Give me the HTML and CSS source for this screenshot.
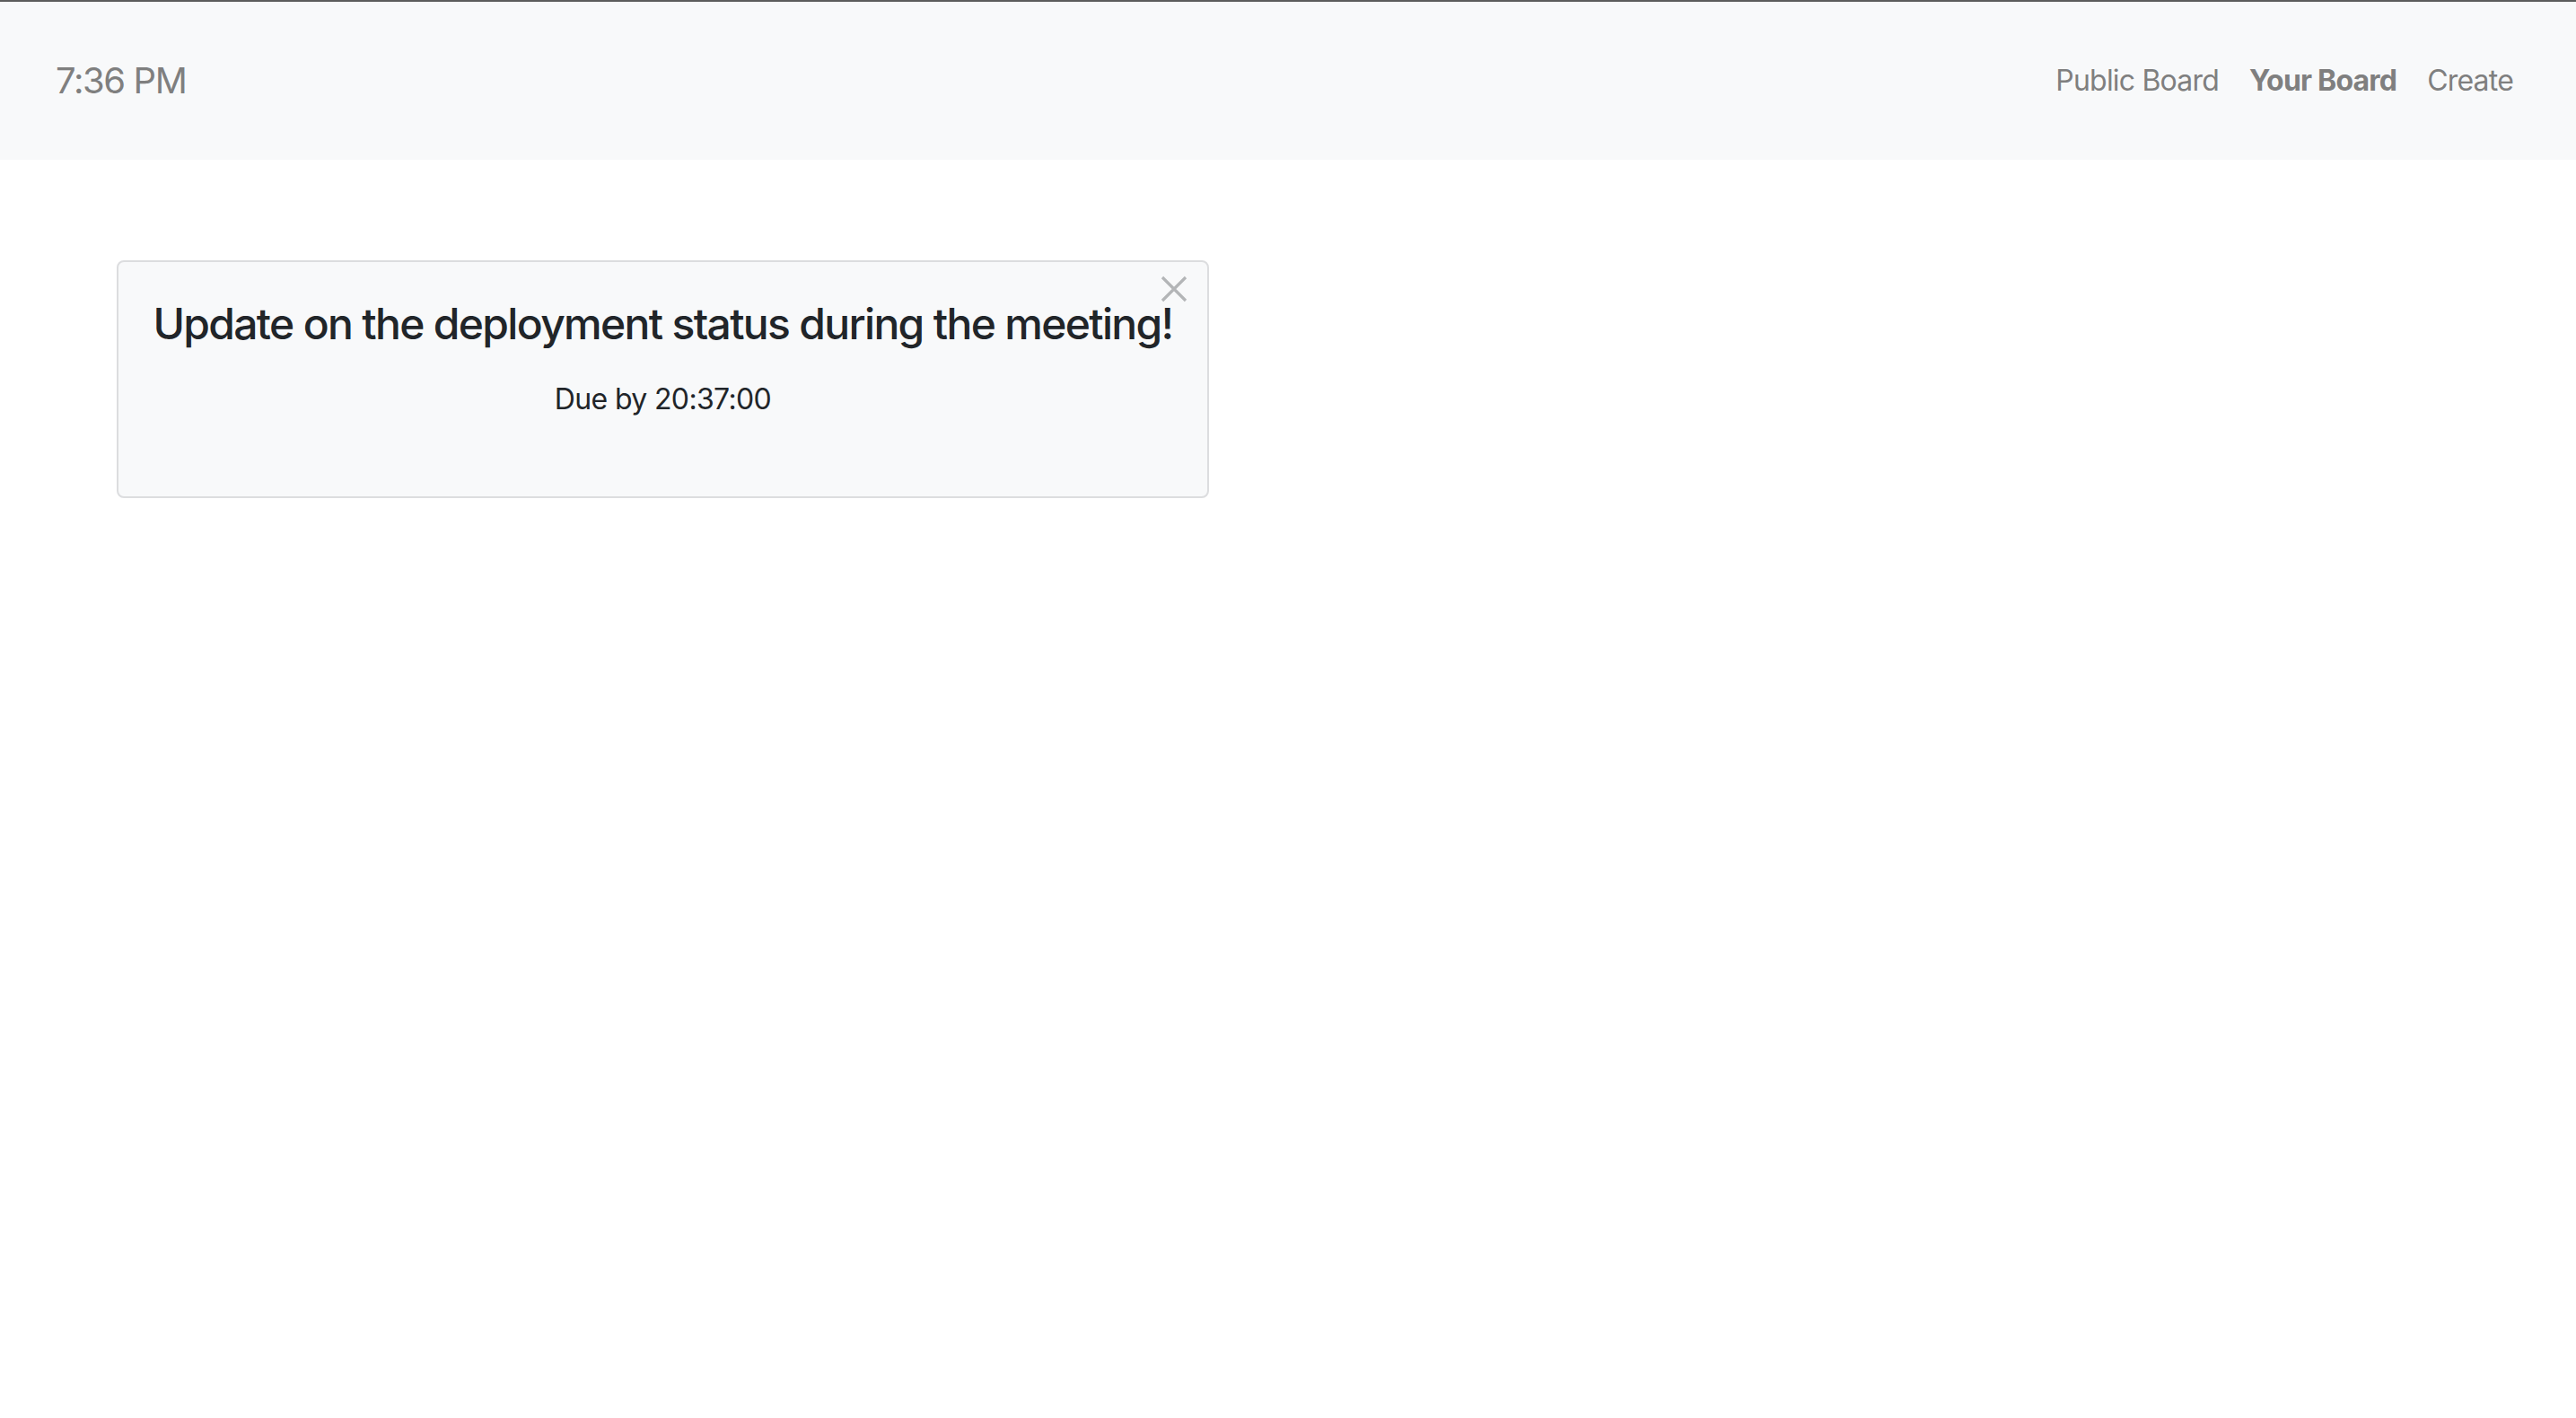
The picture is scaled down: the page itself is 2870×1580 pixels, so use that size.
FILE: index.html
```html
<!DOCTYPE html>
<html lang="en">
<head>
<meta charset="utf-8">
<title>Your Board</title>
<link rel="stylesheet" href="styles.css">
</head>
<body>
<nav class="navbar">
  <span class="brand">7:36 PM</span>
  <ul class="nav">
    <li><a class="nav-link" href="#">Public Board</a></li>
    <li><a class="nav-link active" href="#">Your Board</a></li>
    <li><a class="nav-link" href="#">Create</a></li>
  </ul>
</nav>
<main class="board">
  <div class="card">
    <button class="close" aria-label="Close">
      <svg viewBox="0 0 30 30" width="30" height="30"><path d="M2 2 L28 28 M28 2 L2 28" stroke="#b3b5b7" stroke-width="3.2" fill="none" stroke-linecap="butt"/></svg>
    </button>
    <h4 class="card-title">Update on the deployment status during the meeting!</h4>
    <p class="card-text">Due by 20:37:00</p>
  </div>
</main>
</body>
</html>
```
FILE: styles.css
```css
* { box-sizing: border-box; }
html, body { margin: 0; padding: 0; }
body {
  font-family: Inter, "Noto Sans", "Liberation Sans", sans-serif;
  background: #ffffff;
  color: #212529;
  border-top: 2px solid #5c5c5c;
}
.navbar {
  display: flex;
  align-items: center;
  justify-content: space-between;
  height: 176px;
  background: #f8f9fa;
  padding: 0 53px 0 62px;
}
.brand {
  font-size: 40px;
  color: #7f7f7f;
  line-height: 1;
  letter-spacing: -0.035em;
}
.nav {
  display: flex;
  list-style: none;
  margin: 0;
  padding: 0;
}
.nav-link {
  display: block;
  padding: 0 17px;
  font-size: 32px;
  color: #7f7f7f;
  text-decoration: none;
  line-height: 1.5;
  letter-spacing: -0.025em;
}
.nav-link.active { font-weight: 700; }
.board {
  padding: 112px 0 0 130px;
}
.card {
  position: relative;
  width: 1217px;
  height: 265px;
  background: #f8f9fa;
  border: 2px solid #dcdddf;
  border-radius: 8px;
  padding: 40px 0 0;
  text-align: center;
}
.card-title {
  margin: 0;
  font-size: 48px;
  font-weight: 500;
  line-height: 1.2;
  color: #212529;
  letter-spacing: -0.035em;
  white-space: nowrap;
}
.card-text {
  margin: 31px 0 0;
  font-size: 32px;
  line-height: 1.5;
  color: #212529;
  letter-spacing: -0.02em;
}
.close {
  position: absolute;
  top: 15px;
  right: 22px;
  width: 30px;
  height: 30px;
  padding: 0;
  border: 0;
  background: transparent;
  display: flex;
}
```
